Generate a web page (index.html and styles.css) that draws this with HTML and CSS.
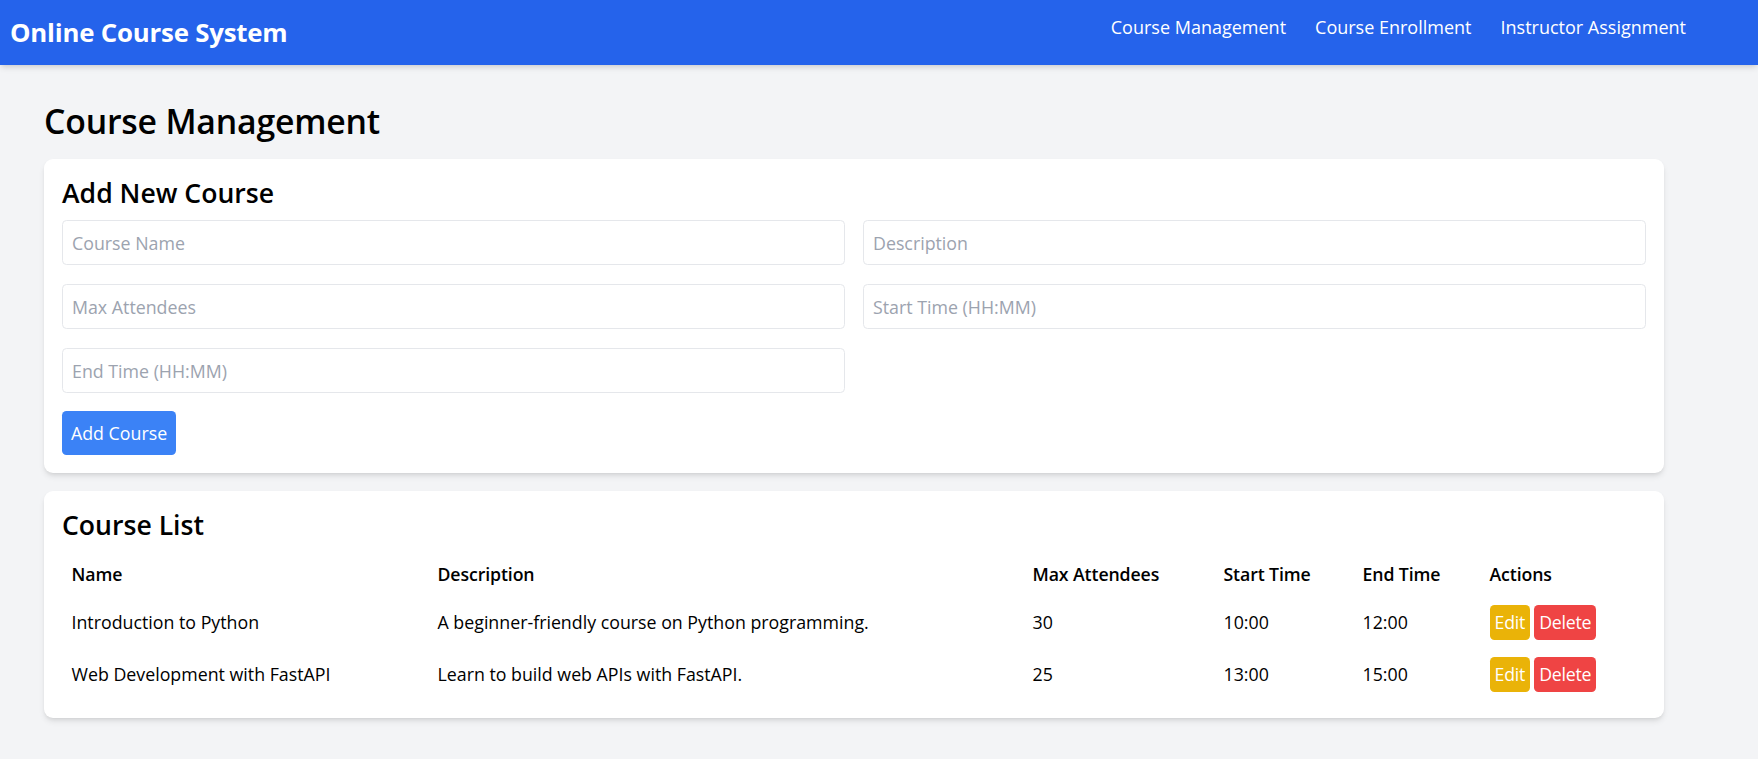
FILE: index.html
```html
<!DOCTYPE html>
<html lang="en">
<head>
<meta charset="utf-8">
<title>Online Course System</title>
<link rel="stylesheet" href="styles.css">
</head>
<body>
<header class="topbar">
  <div class="brand">Online Course System</div>
  <nav class="nav">
    <a class="nav-link" href="#">Course Management</a>
    <a class="nav-link" href="#">Course Enrollment</a>
    <a class="nav-link" href="#">Instructor Assignment</a>
  </nav>
</header>
<main class="page">
  <h1 class="page-title">Course Management</h1>

  <section class="card">
    <h2 class="card-title">Add New Course</h2>
    <form class="course-form">
      <div class="form-grid">
        <input class="field" type="text" placeholder="Course Name">
        <input class="field" type="text" placeholder="Description">
        <input class="field" type="text" placeholder="Max Attendees">
        <input class="field" type="text" placeholder="Start Time (HH:MM)">
        <input class="field" type="text" placeholder="End Time (HH:MM)">
      </div>
      <button class="btn btn-primary" type="button">Add Course</button>
    </form>
  </section>

  <section class="card">
    <h2 class="card-title">Course List</h2>
    <table class="course-table">
      <thead>
        <tr>
          <th class="col-name">Name</th>
          <th class="col-desc">Description</th>
          <th class="col-max">Max Attendees</th>
          <th class="col-start">Start Time</th>
          <th class="col-end">End Time</th>
          <th class="col-actions">Actions</th>
        </tr>
      </thead>
      <tbody>
        <tr>
          <td>Introduction to Python</td>
          <td>A beginner-friendly course on Python programming.</td>
          <td>30</td>
          <td>10:00</td>
          <td>12:00</td>
          <td><div class="actions"><button class="btn-sm btn-edit" type="button">Edit</button><button class="btn-sm btn-delete" type="button">Delete</button></div></td>
        </tr>
        <tr>
          <td>Web Development with FastAPI</td>
          <td>Learn to build web APIs with FastAPI.</td>
          <td>25</td>
          <td>13:00</td>
          <td>15:00</td>
          <td><div class="actions"><button class="btn-sm btn-edit" type="button">Edit</button><button class="btn-sm btn-delete" type="button">Delete</button></div></td>
        </tr>
      </tbody>
    </table>
  </section>
</main>
</body>
</html>
```

FILE: styles.css
```css
* {
  box-sizing: border-box;
}

html, body {
  margin: 0;
  padding: 0;
}

body {
  background: #f3f4f6;
  color: #000;
  font-family: "Open Sans", "Noto Sans", sans-serif;
  font-size: 18px;
  line-height: 27px;
}

.topbar {
  display: flex;
  justify-content: space-between;
  align-items: flex-start;
  height: 65px;
  padding: 14px 72px 0 10px;
  background: #2563eb;
  color: #fff;
  box-shadow: 0 4px 6px -1px rgba(0, 0, 0, 0.1), 0 2px 4px -2px rgba(0, 0, 0, 0.1);
  position: relative;
  z-index: 1;
}

.brand {
  font-size: 25.8px;
  line-height: 36px;
  font-weight: 700;
  letter-spacing: -0.2px;
}

.nav {
  display: flex;
  gap: 29px;
}

.nav-link {
  color: #fff;
  text-decoration: none;
  font-size: 18px;
  line-height: 27px;
}

.page {
  padding: 36px 94px 24px 44px;
}

.page-title {
  margin: 0 0 18px 0;
  font-size: 33.8px;
  line-height: 40px;
  font-weight: 600;
  letter-spacing: -0.2px;
}

.card {
  background: #fff;
  border-radius: 9px;
  padding: 18px;
  margin-bottom: 18px;
  box-shadow: 0 4px 6px -1px rgba(0, 0, 0, 0.1), 0 2px 4px -2px rgba(0, 0, 0, 0.1);
}

.card-title {
  margin: 0 0 11px 0;
  font-size: 26.6px;
  line-height: 32px;
  font-weight: 600;
}

.form-grid {
  display: grid;
  grid-template-columns: 1fr 1fr;
  column-gap: 18px;
  row-gap: 19px;
}

.field {
  display: block;
  width: 100%;
  height: 45px;
  margin: 0;
  padding: 0 9px;
  border: 1px solid #e5e7eb;
  border-radius: 4.5px;
  font-family: inherit;
  font-size: 17.8px;
  color: #111827;
  background: #fff;
  outline: none;
}

.field::placeholder {
  color: #9ca3af;
}

.btn {
  display: inline-block;
  margin-top: 18px;
  border: none;
  font-family: inherit;
  cursor: pointer;
}

.btn-primary {
  height: 44px;
  padding: 0 9px;
  border-radius: 4.5px;
  background: #3b82f6;
  color: #fff;
  font-size: 17.8px;
  line-height: 44px;
}

.course-table {
  width: 100%;
  border-collapse: collapse;
  table-layout: fixed;
}

.course-table th {
  text-align: left;
  font-weight: 600;
  font-size: 17.7px;
  line-height: 27px;
  padding: 8.5px 9.5px;
  letter-spacing: -0.1px;
}

.course-table td {
  text-align: left;
  font-size: 17.8px;
  line-height: 27px;
  padding: 8.5px 9.5px;
  vertical-align: middle;
}

.col-name { width: 366px; }
.col-desc { width: 595px; }
.col-max { width: 191px; }
.col-start { width: 139px; }
.col-end { width: 127px; }
.col-actions { width: 166px; }

.actions {
  display: flex;
  gap: 4px;
}

.btn-sm {
  height: 35px;
  padding: 0 5px;
  border: none;
  border-radius: 4.5px;
  color: #fff;
  font-family: inherit;
  font-size: 17.7px;
  line-height: 35px;
  letter-spacing: -0.2px;
  cursor: pointer;
}

.btn-edit {
  background: #eab308;
}

.btn-delete {
  background: #ef4444;
}
```
